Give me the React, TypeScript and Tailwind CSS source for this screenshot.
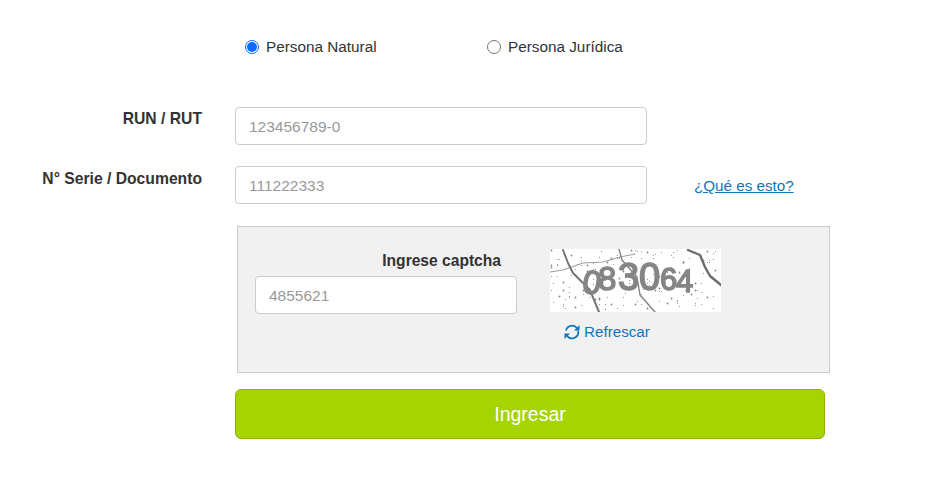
const SPECKS = Array.from({ length: 170 }, (_, i) => ({
  x: ((i * i * 7 + i * 47) % 168) + 1.5,
  y: ((i * 29 + (i * i) % 23) % 60) + 1.5,
  r: i % 4 === 0 ? 0.9 : 0.55,
}));

const DIGITS = [
  { ch: "0", x: 31, y: 43, size: 33, rotate: 10 },
  { ch: "8", x: 48, y: 41, size: 33, rotate: 0 },
  { ch: "3", x: 68, y: 41, size: 38, rotate: 0 },
  { ch: "0", x: 89, y: 41, size: 38, rotate: 0 },
  { ch: "6", x: 110, y: 41, size: 31, rotate: 0 },
  { ch: "4", x: 126, y: 43, size: 31, rotate: 0 },
];

function Captcha() {
  return (
    <svg width="171" height="63" viewBox="0 0 171 63" className="block bg-white">
      <g className="blur-[0.3px]">
        {SPECKS.map((s, i) => (
          <circle key={i} cx={s.x} cy={s.y} r={s.r} fill="#888" />
        ))}
        <g fill="none" strokeLinecap="round" strokeLinejoin="round">
          <path d="M0 23 L13 21 L33 14 L53 13 L70 8 L85 5" stroke="#a0a0a0" strokeWidth="1.2" />
          <path d="M13 1 L18 14 L23 24 L40 41 L49 63" stroke="#777" strokeWidth="2" />
          <path d="M69 0 L72 11 L87 28 L90 46 L105 63" stroke="#808080" strokeWidth="1.4" />
          <path d="M138 1 L150 6 L155 18 L160 27 L171 36" stroke="#6c6c6c" strokeWidth="2.4" />
        </g>
        <g
          fill="#858585"
          stroke="#858585"
          strokeWidth="1.5"
          style={{ fontFamily: '"Liberation Sans", sans-serif' }}
        >
          {DIGITS.map((d, i) => (
            <text key={i} x={d.x} y={d.y} fontSize={d.size} transform={`rotate(${d.rotate} ${d.x} ${d.y})`}>
              {d.ch}
            </text>
          ))}
        </g>
      </g>
    </svg>
  );
}

function RefreshIcon() {
  return (
    <svg width="16" height="16" viewBox="0 0 16 16" fill="none">
      <path d="M2 6.6 A6.2 6.2 0 0 1 13 4.2" stroke="currentColor" strokeWidth="1.7" />
      <path d="M14 6.6 A6.2 6.2 0 0 1 3 11.8" stroke="currentColor" strokeWidth="1.7" />
      <path d="M15.5 1 V6.5 H10 Z" fill="currentColor" />
      <path d="M0.5 15 V9.5 H6 Z" fill="currentColor" />
    </svg>
  );
}

function Radio({ label, checked }: { label: string; checked?: boolean }) {
  return (
    <label className="flex items-center gap-[7px] text-[15.3px] leading-[18px] text-[#333]">
      <span
        className={`flex h-[14px] w-[14px] items-center justify-center rounded-full border bg-white ${
          checked ? "border-[#0a6cff]" : "border-[#767676]"
        }`}
      >
        {checked && <span className="h-[10px] w-[10px] rounded-full bg-[#0a6cff]" />}
      </span>
      {label}
    </label>
  );
}

function Field({ label, placeholder, labelTop }: { label: string; placeholder: string; labelTop: string }) {
  return (
    <div className="flex">
      <div className={`w-[202px] text-right text-[15.7px] leading-[20px] font-bold text-[#333] ${labelTop}`}>
        {label}
      </div>
      <input
        placeholder={placeholder}
        className="ml-[33px] h-[38px] w-[412px] rounded border border-[#ccc] bg-white px-[13px] pt-[1px] text-[15.5px] placeholder:text-[#999]"
      />
    </div>
  );
}

export default function App() {
  return (
    <div
      className="h-[495px] w-[931px] overflow-hidden bg-white pt-[38px]"
      style={{ fontFamily: '"Liberation Sans", Arial, sans-serif' }}
    >
      <div className="ml-[245px] flex">
        <div className="w-[242px]">
          <Radio label="Persona Natural" checked />
        </div>
        <Radio label="Persona Jurídica" />
      </div>

      <div className="mt-[51px] flex flex-col gap-[21px]">
        <Field label="RUN / RUT" placeholder="123456789-0" labelTop="pt-[2px]" />
        <div className="flex items-start">
          <Field label="N° Serie / Documento" placeholder="111222333" labelTop="pt-[3px]" />
          <a href="#" className="mt-[11px] ml-[47px] text-[15.2px] leading-[18px] text-[#0f75bc] underline">
            ¿Qué es esto?
          </a>
        </div>
      </div>

      <div className="mt-[22px] ml-[237px] flex h-[147px] w-[593px] border border-[#ccc] bg-[#f1f1f1] pt-[22px] pl-[17px]">
        <div className="w-[262px] pt-[2px]">
          <div className="pr-[16px] text-right text-[15.6px] leading-[20px] font-bold text-[#333]">
            Ingrese captcha
          </div>
          <input
            placeholder="4855621"
            className="mt-[5px] h-[38px] w-[262px] rounded border border-[#ccc] bg-white px-[13px] pt-[1px] text-[15.5px] placeholder:text-[#999]"
          />
        </div>
        <div className="ml-[33px]">
          <Captcha />
          <a href="#" className="mt-[11px] ml-[14px] flex items-center gap-[4px] text-[15.2px] leading-[18px] text-[#0f75bc]">
            <RefreshIcon />
            Refrescar
          </a>
        </div>
      </div>

      <button className="mt-[16px] ml-[235px] block h-[50px] w-[590px] rounded-md border border-[#8fb300] bg-[#a6d400] pt-[1px] text-[19.5px] text-white">
        Ingresar
      </button>
    </div>
  );
}
